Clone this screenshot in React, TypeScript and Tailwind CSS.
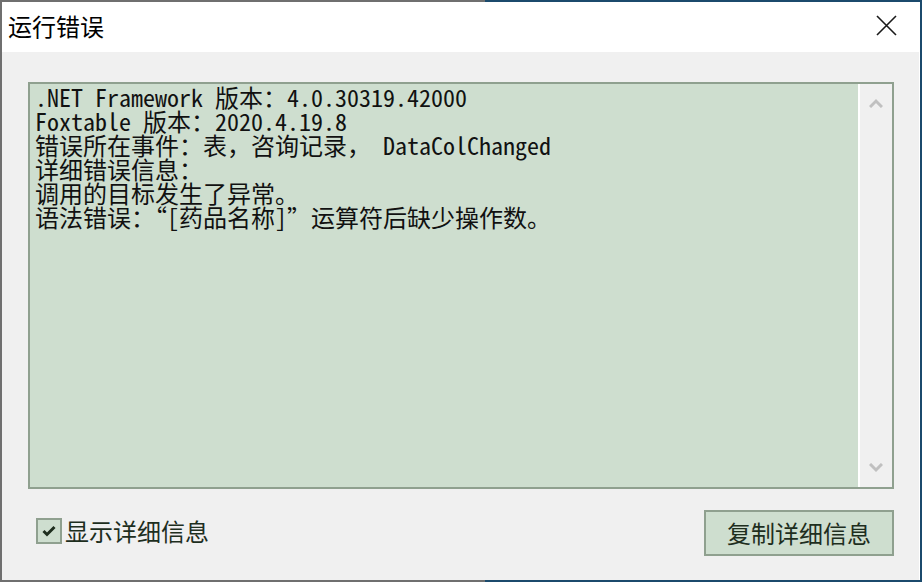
import React from 'react';

const lines = [
  '.NET Framework 版本：4.0.30319.42000',
  'Foxtable 版本：2020.4.19.8',
  '错误所在事件：表，咨询记录， DataColChanged',
  '详细错误信息：',
  '调用的目标发生了异常。',
  '语法错误：“[药品名称]”运算符后缺少操作数。',
];

const mono = { fontFamily: '"Noto Sans Mono CJK SC", "Liberation Mono", "Noto Sans CJK SC", monospace' };
const ui = { fontFamily: '"Noto Sans CJK SC", "Noto Sans", sans-serif' };

export default function App() {
  return (
    <div className="w-[922px] h-[582px] bg-[linear-gradient(to_right,#6f6f6f_485px,#1b4a6c_485px)] flex pl-[2px] pt-[2px] overflow-hidden">
      <div className="w-[918px] h-[578px] flex flex-col bg-[#f0f0f0] border-r border-white">
        <div className="h-[50px] bg-white flex items-center justify-between pl-[6px] pr-[22px] pb-[3px]">
          <span className="text-[24px] leading-none text-black" style={ui}>运行错误</span>
          <svg width="21" height="21" viewBox="0 0 21 21">
            <path d="M1 1 L20 20 M20 1 L1 20" stroke="#1a1a1a" strokeWidth="1.6" fill="none" />
          </svg>
        </div>

        <div className="flex-1 flex flex-col pl-[26px] pt-[30px]">
          <div className="w-[866px] h-[407px] border-2 border-[#8fa08f] bg-[#cedecf] flex">
            <div className="flex-1 pl-[5px] pt-[1px] text-[24px] leading-[24px] text-[#111]" style={mono}>
              {lines.map((l, i) => (
                <div key={i} className="whitespace-pre">{l}</div>
              ))}
            </div>
            <div className="w-[34px] border-l-2 border-white bg-[#f0f0f0] flex flex-col items-center justify-between py-[14px]">
              <svg width="14" height="10" viewBox="0 0 14 10">
                <path d="M1 9 L7 3 L13 9" stroke="#c0c0c0" strokeWidth="3" fill="none" />
              </svg>
              <svg width="14" height="10" viewBox="0 0 14 10">
                <path d="M1 1 L7 7 L13 1" stroke="#c0c0c0" strokeWidth="3" fill="none" />
              </svg>
            </div>
          </div>

          <div className="flex items-start justify-between w-[866px] mt-[21px]">
            <label className="flex items-center mt-[8px] ml-[8px]">
              <span className="w-[26px] h-[26px] border-2 border-[#8fa08f] bg-[#cedecf] flex items-center justify-center">
                <svg width="14" height="12" viewBox="0 0 14 12">
                  <path d="M1.5 6 L5 9.5 L12.5 2" stroke="#1e2e1e" strokeWidth="3" fill="none" />
                </svg>
              </span>
              <span className="ml-[3px] text-[24px] leading-none text-[#1e2e1e]" style={ui}>显示详细信息</span>
            </label>
            <button className="w-[190px] h-[46px] border-2 border-[#8fa08f] bg-[#cedecf] text-[24px] leading-none text-[#1e2e1e]" style={ui}>
              复制详细信息
            </button>
          </div>
        </div>
      </div>
    </div>
  );
}
